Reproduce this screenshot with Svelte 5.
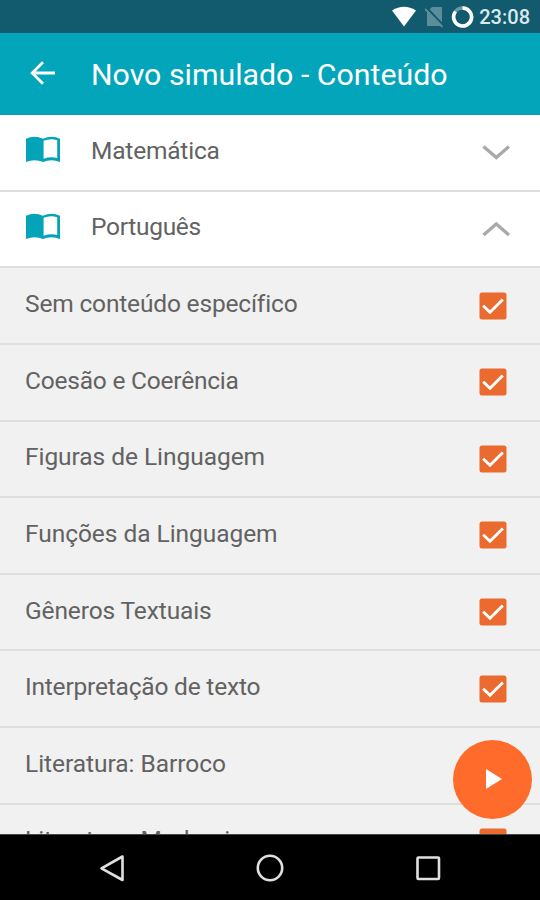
<script>
  const subjects = [
    { name: 'Matemática', open: false, tracking: -0.2 },
    { name: 'Português', open: true, tracking: -0.3 }
  ];
  const topics = [
    { name: 'Sem conteúdo específico', tracking: -0.17 },
    { name: 'Coesão e Coerência', tracking: -0.22 },
    { name: 'Figuras de Linguagem', tracking: -0.05 },
    { name: 'Funções da Linguagem', tracking: -0.05 },
    { name: 'Gêneros Textuais', tracking: -0.12 },
    { name: 'Interpretação de texto', tracking: -0.2 },
    { name: 'Literatura: Barroco', tracking: -0.04 },
    { name: 'Literatura: Modernismo', tracking: -0.04 }
  ];
</script>

<div class="screen">
  <div class="status">
    <svg class="wifi" width="26" height="22" viewBox="0 0 26 22"><path d="M13 20.5 1 4.5Q13-3 25 4.5Z" fill="#fff" /></svg>
    <svg class="sim" width="19" height="22" viewBox="0 0 19 22">
      <path d="M7 1H17V20H2V6Z" fill="#5b8d9b" />
      <path d="M1 1 19 20" stroke="#125a6e" stroke-width="2" />
      <path d="M0 3 17.500 21" stroke="#5b8d9b" stroke-width="1.8" />
    </svg>
    <svg class="battery" width="23" height="24" viewBox="0 0 23 24">
      <circle cx="11.5" cy="12" r="9" fill="none" stroke="#6998a5" stroke-width="3.4" />
      <path d="M11.5 3A9 9 0 1 1 4.5 6.5" fill="none" stroke="#fff" stroke-width="3.6" />
    </svg>
    <span class="clock">23:08</span>
  </div>

  <header>
    <svg width="26" height="24" viewBox="0 0 26 24" fill="none" stroke="#fff" stroke-width="2.8">
      <path d="M26 12H4M14 1.2 3.2 12 14 22.8" />
    </svg>
    <h1>Novo simulado - Conteúdo</h1>
  </header>

  <main>
    {#each subjects as subject}
      <div class="row subject">
        <svg class="book" width="34" height="27" viewBox="0 0 34 27">
          <path d="M0 2.8Q8.5-1.2 17 2.8Q25.5-1.2 34 2.8V26Q25.5 22.5 17 26Q8.5 22.5 0 26Z" fill="#03a4b7" />
          <path d="M17.6 4.8Q24.500 1.8 31.200 4.300V22Q24.500 20.300 17.6 22.8Z" fill="#fff" />
        </svg>
        <span class="label" style="letter-spacing: {subject.tracking}px">{subject.name}</span>
        <svg class="chevron" width="28" height="16" viewBox="0 0 28 16" fill="none" stroke="#a9a9a9" stroke-width="3.3">
          <path d={subject.open ? 'M1.5 14 14.300 3 27 14' : 'M1.5 2.500 14.300 13.500 27 2.500'} />
        </svg>
      </div>
    {/each}
    {#each topics as topic}
      <div class="row topic">
        <span class="label" style="letter-spacing: {topic.tracking}px">{topic.name}</span>
        <svg class="check" width="28" height="28" viewBox="0 0 28 28">
          <rect x=".5" y=".5" width="27" height="27" rx="2.5" fill="#ea6a2f" />
          <path d="M4.2 13.8 11 20.3 23.8 7.5" fill="none" stroke="#fff" stroke-width="2.9" />
        </svg>
      </div>
    {/each}
    <button class="fab" aria-label="Iniciar">
      <svg width="16" height="20" viewBox="0 0 16 20"><path d="M0 0 16 10 0 20Z" fill="#fff" /></svg>
    </button>
  </main>

  <nav>
    <svg width="40" height="40" viewBox="0 0 40 40"><path d="M30.5 8.5V32L9.5 20.3Z" /></svg>
    <svg width="40" height="40" viewBox="0 0 40 40"><circle cx="20" cy="20" r="12.2" /></svg>
    <svg width="40" height="40" viewBox="0 0 40 40"><rect x="9.5" y="9.5" width="21.5" height="21.5" rx="1" /></svg>
  </nav>
</div>

<style>
  .screen {
    width: 540px;
    height: 900px;
    overflow: hidden;
    display: flex;
    flex-direction: column;
    font-family: Roboto, sans-serif;
    background: #f1f1f1;
  }
  .status {
    height: 33px;
    flex: none;
    box-sizing: border-box;
    padding-right: 10px;
    background: #125a6e;
    display: flex;
    align-items: center;
    justify-content: flex-end;
  }
  .wifi { margin-right: 8px; }
  .sim { margin-right: 7px; }
  .battery { margin-right: 5px; }
  .clock {
    color: #dce9ec;
    font-size: 20px;
    font-weight: 500;
    line-height: 33px;
    padding-top: 2px;
  }
  header {
    height: 82px;
    flex: none;
    box-sizing: border-box;
    padding-left: 29px;
    background: #02a5b9;
    border-bottom: 1px solid #1497a8;
    display: flex;
    align-items: center;
    gap: 36px;
  }
  header svg { margin-bottom: 1px; }
  h1 {
    margin: 2px 0 0;
    color: #fff;
    font-size: 30.3px;
    font-weight: 400;
    line-height: 40px;
    white-space: nowrap;
  }
  main {
    position: relative;
    height: 719px;
    flex: none;
    overflow: hidden;
  }
  .row {
    height: 76.625px;
    box-sizing: border-box;
    border-bottom: 2px solid #dedede;
    padding: 0 33px 0 25px;
    display: flex;
    align-items: center;
    color: #626262;
  }
  .subject {
    background: #fff;
    padding: 0 30px 0 26px;
  }
  .label {
    flex: 1;
    font-size: 24.5px;
    line-height: 30px;
    white-space: nowrap;
    margin-bottom: 3px;
  }
  .book {
    margin-right: 31px;
    margin-bottom: 5px;
  }
  .fab {
    position: absolute;
    left: 453px;
    top: 625px;
    width: 79px;
    height: 79px;
    border: 0;
    border-radius: 50%;
    padding: 0 0 2px 3px;
    background: #ff6b2b;
    display: flex;
    align-items: center;
    justify-content: center;
  }
  nav {
    flex: 1;
    box-sizing: border-box;
    background: #000;
    border-top: 1px solid #444;
    display: flex;
    align-items: center;
    justify-content: space-between;
    padding: 0 92px;
  }
  nav svg {
    fill: none;
    stroke: #e0e0e0;
    stroke-width: 2.6;
    stroke-linejoin: round;
  }
</style>
